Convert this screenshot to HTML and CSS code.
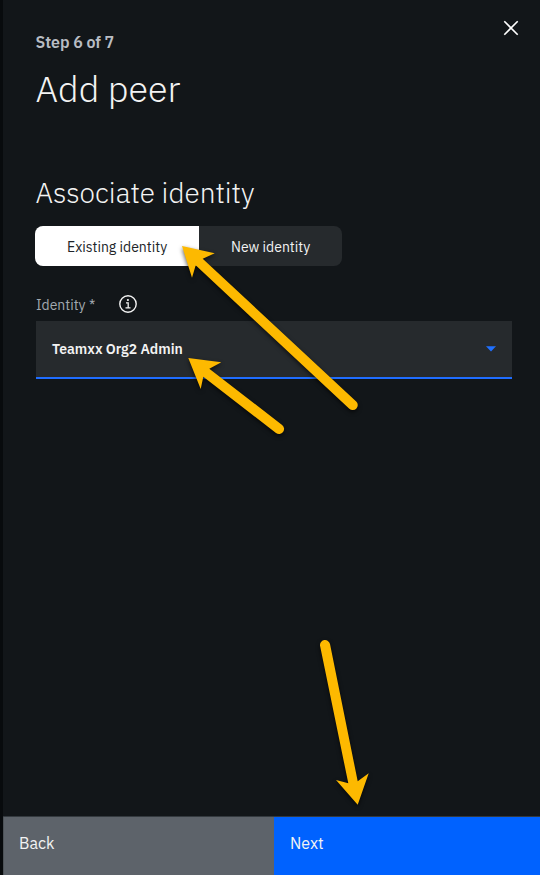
FILE: index.html
```html
<!DOCTYPE html>
<html lang="en">
<head>
<meta charset="utf-8">
<title>Add peer</title>
<link rel="stylesheet" href="styles.css">
</head>
<body>
<main class="panel">
  <header class="header">
    <div>
      <p class="step"><span>Step 6 of 7</span></p>
      <h1 class="title"><span>Add peer</span></h1>
    </div>
    <button class="close" aria-label="Close">
      <svg width="16" height="16" viewBox="0 0 16 16"><path d="M1.3 1.3 14.7 14.7M14.7 1.3 1.3 14.7" fill="none" stroke="#fff" stroke-width="1.6"/></svg>
    </button>
  </header>
  <section class="content">
    <h2 class="subtitle"><span>Associate identity</span></h2>
    <div class="switcher">
      <button class="tab tab-active"><span>Existing identity</span></button>
      <button class="tab tab-new"><span>New identity</span></button>
    </div>
    <div class="label-row">
      <label class="label"><span>Identity *</span></label>
      <svg class="info" width="18" height="18" viewBox="0 0 18 18"><circle cx="9" cy="9" r="8.2" fill="none" stroke="#f3f3f3" stroke-width="1.4"/><path d="M7 7.8h2.2v5M6.5 12.8h5" fill="none" stroke="#f3f3f3" stroke-width="1.3"/><circle cx="8.9" cy="5" r="1.1" fill="#f3f3f3"/></svg>
    </div>
    <div class="select">
      <span class="value">Teamxx Org2 Admin</span>
      <svg width="10" height="6" viewBox="0 0 10 6"><path d="M0 .2h10L5 5.6z" fill="#1f70ff"/></svg>
    </div>
  </section>
  <footer class="actions">
    <button class="action back"><span>Back</span></button>
    <button class="action next"><span>Next</span></button>
  </footer>
</main>
<svg class="arrows" width="540" height="875" viewBox="0 0 540 875">
  <g fill="#fdb900">
    <path d="M182 246 214.7 253.3 202.7 258.7 356.2 401.4A5 5 0 0 1 349.3 408.7L195.7 265.3 192 277.7Z"/>
    <path d="M188.3 358 221.3 362.3 209.3 368.7 282.1 425A5 5 0 0 1 276 433L203.3 376.7 200.7 389Z"/>
    <path d="M320.1 646A5 5 0 0 1 330 644.1L357.7 781.3 368.7 773.3 357.7 804.7 336 780 348.3 783.3Z"/>
  </g>
</svg>
</body>
</html>
```
FILE: styles.css
```css
* { box-sizing: border-box; }
body {
  margin: 0;
  background: #080b0d;
  color: #f3f3f3;
  font-family: "IBM Plex Sans", Roboto, sans-serif;
}
h1, h2, p { margin: 0; font-weight: 300; }
button { border: 0; padding: 0; background: none; color: inherit; font: inherit; text-align: left; }
svg { display: block; }
.panel {
  display: flex;
  flex-direction: column;
  height: 875px;
  margin-left: 3px;
  background: #121619;
}
.header {
  display: flex;
  justify-content: space-between;
  height: 160px;
  padding: 20px 21px 0 32.5px;
}
.step {
  margin-top: 12px;
  color: #b8bdc3;
  font-size: 16px;
  font-weight: 600;
  line-height: 20px;
  letter-spacing: -0.05px;
}
.title {
  margin-top: 15px;
  font-size: 36px;
  line-height: 44px;
}
.close { height: 16px; }
.content { flex: 1; padding: 15px 28px 0 33px; }
.subtitle { margin-left: -0.5px; font-size: 28px; line-height: 36px; }
.switcher {
  display: flex;
  width: 307px;
  height: 40px;
  margin: 15px 0 0 -1px;
  overflow: hidden;
  border-radius: 8px;
  background: #262a2d;
}
.tab { padding: 1px 0 0 32px; font-size: 14px; }
.tab-active { width: 164px; background: #fff; color: #202428; }
.label-row {
  display: flex;
  align-items: center;
  gap: 24px;
  height: 20px;
  margin-top: 28px;
}
.label { width: 59px; padding-top: 2px; color: #a2a9b0; font-size: 14px; line-height: 20px; white-space: nowrap; }
.select {
  display: flex;
  align-items: center;
  justify-content: space-between;
  width: 476px;
  height: 58px;
  margin-top: 7px;
  padding: 0 16px;
  border-bottom: 2px solid #1f6dff;
  background: #262a2d;
}
.value { font-size: 14px; font-weight: 600; }
.actions { display: flex; height: 59px; border-top: 1px solid #343a3f; }
.action { padding: 16px 16px 0; font-size: 16px; line-height: 20px; display: flex; }
.back { width: 271px; padding-left: 15px; border-left: 1px solid #4d5358; background: #5d636a; }
.next { flex: 1; background: #0062ff; }
.arrows {
  position: absolute;
  top: 0;
  left: 0;
  filter: drop-shadow(0 2px 2px rgba(0, 0, 0, 0.65));
  pointer-events: none;
}
```
